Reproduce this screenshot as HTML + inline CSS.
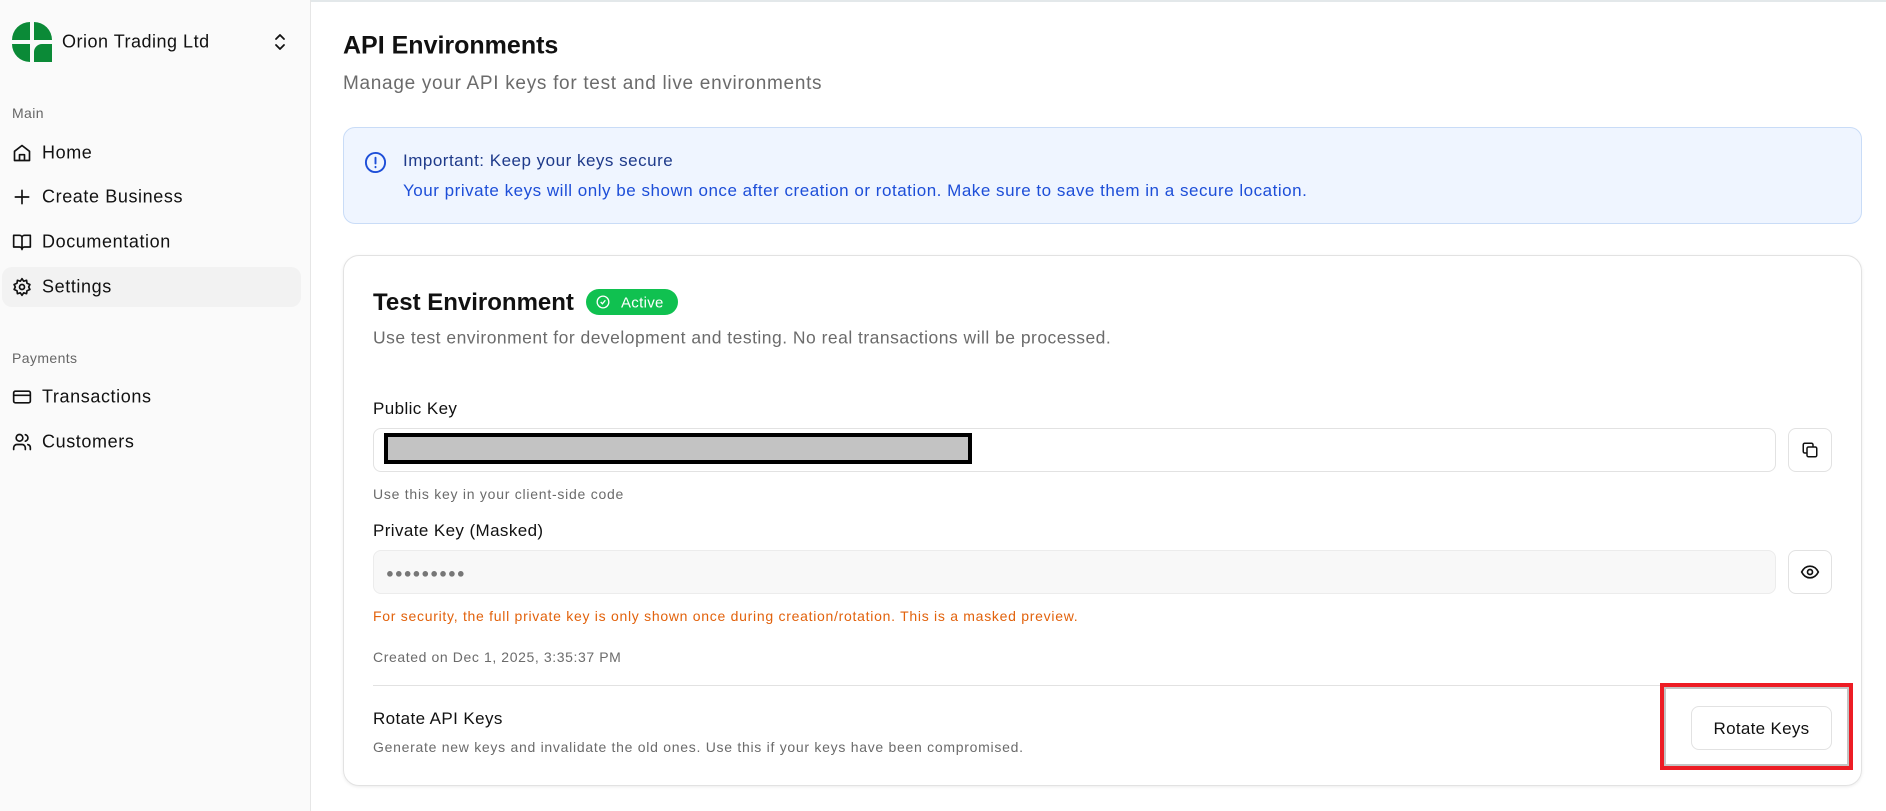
<!DOCTYPE html>
<html><head><meta charset="utf-8"><style>
*{box-sizing:border-box;margin:0;padding:0}
body{width:1886px;height:811px;background:#fff;font-family:"Liberation Sans",sans-serif;color:#111;position:relative;overflow:hidden}
.abs{position:absolute;white-space:nowrap}
.side{position:absolute;left:0;top:0;width:311px;height:811px;background:#fafafa;border-right:1px solid #e6e6e6}
.topline{position:absolute;left:0;top:0;width:1886px;height:2px;background:#e3e8ea}
.nav{position:absolute;left:42px;font-size:18px;color:#111;transform:translateY(-50%);letter-spacing:.6px}
.ico{position:absolute;left:12px;width:20px;height:20px;transform:translateY(-50%)}
.sec{position:absolute;left:12px;font-size:14px;color:#666;transform:translateY(-50%);letter-spacing:.4px}
.c{transform:translateY(-50%)}
</style></head><body>
<div class="topline"></div>
<div class="side">
  <svg class="abs" style="left:12px;top:22px" width="40" height="40" viewBox="0 0 40 40">
    <path d="M18 0 V18 H0 A18 18 0 0 1 18 0Z" fill="#0b8a37"/>
    <path d="M22 0 A18 18 0 0 1 40 18 H22Z" fill="#0b8a37"/>
    <path d="M0 22 H18 V40 A18 18 0 0 1 0 22Z" fill="#0b8a37"/>
    <path d="M22 40 V30 A8 8 0 0 1 30 22 H40 V40Z" fill="#0b8a37"/>
  </svg>
  <div class="abs c" style="left:62px;top:42px;font-size:18px;letter-spacing:.5px">Orion Trading Ltd</div>
  <svg class="abs" style="left:272px;top:32px" width="16" height="20" viewBox="0 0 16 20" fill="none" stroke="#111" stroke-width="1.8" stroke-linecap="round" stroke-linejoin="round"><path d="M4 7 L8 3 L12 7 M4 13 L8 17 L12 13"/></svg>
  <div class="sec" style="top:113px">Main</div>
  <svg class="ico" style="top:153px" viewBox="0 0 24 24" fill="none" stroke="#111" stroke-width="2" stroke-linejoin="round"><path d="M3 10 L12 3 L21 10 V21 H3Z M9 21 V14 H15 V21"/></svg>
  <div class="nav" style="top:153px">Home</div>
  <svg class="ico" style="top:197px" viewBox="0 0 24 24" fill="none" stroke="#111" stroke-width="2" stroke-linecap="round"><path d="M12 4 V20 M4 12 H20"/></svg>
  <div class="nav" style="top:197px">Create Business</div>
  <svg class="ico" style="top:242px" viewBox="0 0 24 24" fill="none" stroke="#111" stroke-width="2" stroke-linejoin="round"><path d="M2 4 H9 A3 3 0 0 1 12 7 V21 A3 3 0 0 0 9 18 H2Z M22 4 H15 A3 3 0 0 0 12 7 V21 A3 3 0 0 1 15 18 H22Z"/></svg>
  <div class="nav" style="top:242px">Documentation</div>
  <div class="abs" style="left:2px;top:267px;width:299px;height:40px;background:#f2f2f2;border-radius:10px"></div>
  <svg class="ico" style="top:287px" viewBox="0 0 24 24" fill="none" stroke="#111" stroke-width="2"><circle cx="12" cy="12" r="3"/><path d="M12 2 L14 5 L17.5 4 L18 7.5 L21.5 9 L20 12 L21.5 15 L18 16.5 L17.5 20 L14 19 L12 22 L10 19 L6.5 20 L6 16.5 L2.5 15 L4 12 L2.5 9 L6 7.5 L6.5 4 L10 5Z" stroke-linejoin="round"/></svg>
  <div class="nav" style="top:287px">Settings</div>
  <div class="sec" style="top:358px">Payments</div>
  <svg class="ico" style="top:397px" viewBox="0 0 24 24" fill="none" stroke="#111" stroke-width="2"><rect x="2" y="5" width="20" height="14" rx="2"/><path d="M2 10 H22"/></svg>
  <div class="nav" style="top:397px">Transactions</div>
  <svg class="ico" style="top:442px" viewBox="0 0 24 24" fill="none" stroke="#111" stroke-width="2" stroke-linecap="round"><circle cx="9" cy="7" r="4"/><path d="M2 21 V19 A4 4 0 0 1 6 15 H12 A4 4 0 0 1 16 19 V21 M16 3.2 A4 4 0 0 1 16 11 M22 21 V19 A4 4 0 0 0 19 15.1"/></svg>
  <div class="nav" style="top:442px">Customers</div>
</div>

<div class="abs c" style="left:343px;top:46px;font-size:25px;font-weight:600;color:#111">API Environments</div>
<div class="abs c" style="left:343px;top:84px;font-size:19px;color:#6b6b6b;letter-spacing:.7px">Manage your API keys for test and live environments</div>

<div class="abs" style="left:343px;top:127px;width:1519px;height:97px;background:#eff5ff;border:1px solid #c9dcf7;border-radius:12px"></div>
<svg class="abs" style="left:364px;top:151px" width="23" height="23" viewBox="0 0 24 24" fill="none" stroke="#1d4ed8" stroke-width="2" stroke-linecap="round"><circle cx="12" cy="12" r="10"/><path d="M12 7 V13 M12 16.5 V17"/></svg>
<div class="abs c" style="left:403px;top:161px;font-size:17px;color:#1e3a8a;letter-spacing:.5px">Important: Keep your keys secure</div>
<div class="abs c" style="left:403px;top:191px;font-size:17px;color:#1d4ed8;letter-spacing:.52px">Your private keys will only be shown once after creation or rotation. Make sure to save them in a secure location.</div>

<div class="abs" style="left:343px;top:255px;width:1519px;height:531px;border:1px solid #e2e2e2;border-radius:16px;box-shadow:0 1px 3px rgba(0,0,0,.08)"></div>
<div class="abs c" style="left:373px;top:303px;font-size:24px;font-weight:600;color:#111">Test Environment</div>
<div class="abs" style="left:586px;top:289px;width:92px;height:26px;background:#10c150;border-radius:13px"></div>
<svg class="abs" style="left:596px;top:295px" width="14" height="14" viewBox="0 0 24 24" fill="none" stroke="#fff" stroke-width="2.2"><circle cx="12" cy="12" r="10"/><path d="M8 12 L11 15 L16 9"/></svg>
<div class="abs c" style="left:621px;top:303px;font-size:15px;color:#fff;letter-spacing:.3px">Active</div>
<div class="abs c" style="left:373px;top:338px;font-size:17.5px;color:#6b6b6b;letter-spacing:.48px">Use test environment for development and testing. No real transactions will be processed.</div>

<div class="abs c" style="left:373px;top:409px;font-size:17px;color:#111;letter-spacing:.4px">Public Key</div>
<div class="abs" style="left:373px;top:428px;width:1403px;height:44px;border:1px solid #e2e2e2;border-radius:8px"></div>
<div class="abs" style="left:384px;top:433px;width:588px;height:31px;border:4px solid #000;background:#c3c3c3"></div>
<div class="abs" style="left:1788px;top:428px;width:44px;height:44px;border:1px solid #e2e2e2;border-radius:8px"></div>
<svg class="abs" style="left:1801px;top:441px" width="18" height="18" viewBox="0 0 24 24" fill="none" stroke="#111" stroke-width="2" stroke-linejoin="round"><rect x="8" y="8" width="13" height="13" rx="2"/><path d="M16 8 V5 A2 2 0 0 0 14 3 H5 A2 2 0 0 0 3 5 V14 A2 2 0 0 0 5 16 H8"/></svg>
<div class="abs c" style="left:373px;top:494px;font-size:14px;color:#6b6b6b;letter-spacing:.75px">Use this key in your client-side code</div>

<div class="abs c" style="left:373px;top:531px;font-size:17px;color:#111;letter-spacing:.4px">Private Key (Masked)</div>
<div class="abs" style="left:373px;top:550px;width:1403px;height:44px;border:1px solid #ececec;background:#f8f8f8;border-radius:8px"></div>
<div class="abs c" style="left:386px;top:573px;font-size:13px;color:#777;letter-spacing:1px">●●●●●●●●●</div>
<div class="abs" style="left:1788px;top:550px;width:44px;height:44px;border:1px solid #e2e2e2;border-radius:8px"></div>
<svg class="abs" style="left:1800px;top:562px" width="20" height="20" viewBox="0 0 24 24" fill="none" stroke="#111" stroke-width="2"><path d="M2 12 C5 6 9 5 12 5 C15 5 19 6 22 12 C19 18 15 19 12 19 C9 19 5 18 2 12Z"/><circle cx="12" cy="12" r="3"/></svg>
<div class="abs c" style="left:373px;top:616px;font-size:14px;color:#e2620c;letter-spacing:.72px">For security, the full private key is only shown once during creation/rotation. This is a masked preview.</div>
<div class="abs c" style="left:373px;top:657px;font-size:14px;color:#6b6b6b;letter-spacing:.6px">Created on Dec 1, 2025, 3:35:37 PM</div>
<div class="abs" style="left:373px;top:685px;width:1459px;height:1px;background:#e2e2e2"></div>
<div class="abs c" style="left:373px;top:719px;font-size:17px;color:#111;letter-spacing:.4px">Rotate API Keys</div>
<div class="abs c" style="left:373px;top:747px;font-size:14px;color:#6b6b6b;letter-spacing:.72px">Generate new keys and invalidate the old ones. Use this if your keys have been compromised.</div>
<div class="abs" style="left:1660px;top:683px;width:193px;height:87px;border:4px solid #ed1c24"></div>
<div class="abs" style="left:1664px;top:687px;width:185px;height:79px;border:2px solid #c4c4c4"></div>
<div class="abs" style="left:1691px;top:706px;width:141px;height:44px;border:1px solid #e2e2e2;border-radius:8px;background:#fff"></div>
<div class="abs c" style="left:1691px;top:729px;width:141px;text-align:center;font-size:17px;color:#111;letter-spacing:.3px">Rotate Keys</div>
</body></html>
